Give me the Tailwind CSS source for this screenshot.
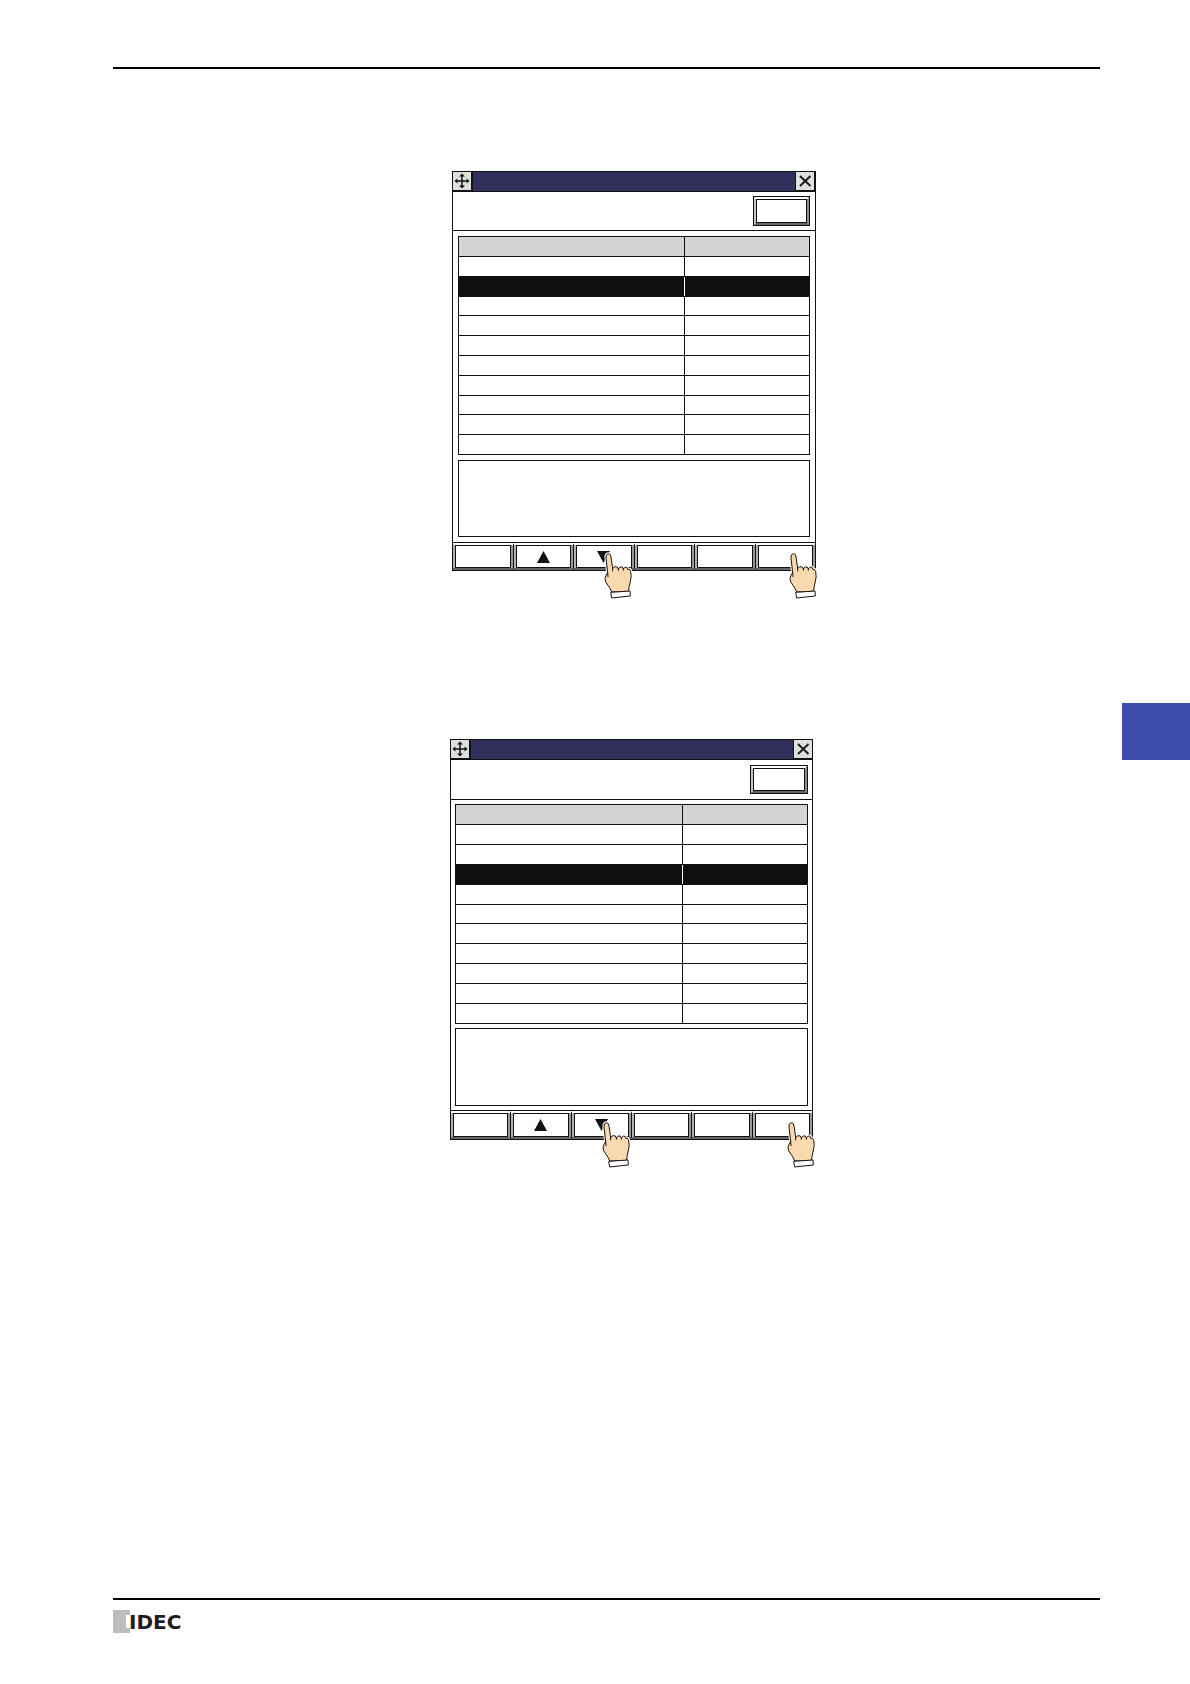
<!DOCTYPE html>
<html lang="en">
<head>
  <meta charset="UTF-8" />
  <meta name="viewport" content="width=device-width, initial-scale=1.0"/>
  <title>IDEC</title>
  <script src="https://cdn.jsdelivr.net/npm/@tailwindcss/browser@4"></script>
</head>
<body class="bg-white">
  <!-- shared icons -->
  <svg class="hidden">
    <symbol id="move" viewBox="0 0 18 18">
      <path d="M9 3v12M2.5 9h13" stroke="#141414" stroke-width="1.5" fill="none"/>
      <path d="M9 1.5L12 4.6H6zM9 16.5L12 13.4H6zM1.5 9L4.4 6.6v4.8zM16.5 9L13.6 6.6v4.8z" fill="#141414"/>
    </symbol>
    <symbol id="close" viewBox="0 0 18 18">
      <path d="M4 4l10.5 10M14.5 4L4 14" stroke="#1c1c1c" stroke-width="2" fill="none"/>
    </symbol>
    <symbol id="hand" viewBox="43 22 84 141">
      <path d="M54 84L49 40Q48 28 56 27Q63 27 64 37L69 71Q75 63 83 67L86 73Q91 64 98 67L101 73Q107 64 112 68L114 74Q120 71 123 80Q127 95 121 115Q117 128 117 138L121 139L122 154L66 160L63 143L66 140Q62 130 55 122Q46 112 46 101Q48 92 54 84Z" fill="#fff" stroke="#fff" stroke-width="9" stroke-linejoin="round"/>
      <path d="M54 84L49 40Q48 28 56 27Q63 27 64 37L69 71Q75 63 83 67L86 73Q91 64 98 67L101 73Q107 64 112 68L114 74Q120 71 123 80Q127 95 121 115Q117 128 117 140L66 142Q62 130 55 122Q46 112 46 101Q48 92 54 84Z" fill="#f8d9b0" stroke="#1b1410" stroke-width="3" stroke-linejoin="round"/>
      <path d="M54 84L55 96M69 71V79M86 73V77M101 73V77" fill="none" stroke="#1b1410" stroke-width="3" stroke-linecap="round"/>
      <path d="M63 143L121 139L122 154L66 160Z" fill="#fff" stroke="#1b1410" stroke-width="3" stroke-linejoin="round"/>
    </symbol>
  </svg>

  <div class="relative min-h-screen flex flex-col pl-[113px] pr-[90px] pt-[67px] pb-[50px]">
    <header class="border-t-2 border-black"></header>

    <main class="flex-1">
      <!-- first window -->
      <section class="relative w-[364px] mt-[102px] ml-[339px] border border-[#111]">
        <div class="flex h-5 bg-[#312f5b] border-b border-[#111]">
          <button aria-label="Move" class="w-5 bg-[#dfdfdb] border-r-2 border-b border-[#111]"><svg class="w-[18px] h-[18px]"><use href="#move"/></svg></button>
          <button aria-label="Close" class="ml-auto w-5 bg-[#dfdfdb] border-x border-b border-[#111]"><svg class="w-[18px] h-[18px]"><use href="#close"/></svg></button>
        </div>
        <div class="flex items-center justify-end h-[39px] px-[5px] border-b border-[#111]">
          <button aria-label="Top" class="flex w-[57px] h-[30px] border border-[#111]">
            <span class="block w-full h-full border-2 border-t-white border-l-[#c9c5c0] border-r-[#8c8c8c] border-b-[#666]"><span class="block w-full h-full border border-[#111]"></span></span>
          </button>
        </div>
        <div class="p-[5px] flex flex-col gap-[5px]">
          <table class="w-full h-[219px] table-fixed border-collapse">
            <thead>
              <tr class="h-5 bg-[#d3d3d3]"><th class="w-[226px] h-5 p-0 border border-[#111]"></th><th class="p-0 border border-[#111]"></th></tr>
            </thead>
            <tbody>
              <tr><td class="p-0 border border-[#111]"></td><td class="p-0 border border-[#111]"></td></tr>
              <tr class="bg-[#0f0f0f]"><td class="p-0 border border-[#111] border-r-white"></td><td class="p-0 border border-[#111] border-l-white"></td></tr>
              <tr><td class="p-0 border border-[#111]"></td><td class="p-0 border border-[#111]"></td></tr>
              <tr><td class="p-0 border border-[#111]"></td><td class="p-0 border border-[#111]"></td></tr>
              <tr><td class="p-0 border border-[#111]"></td><td class="p-0 border border-[#111]"></td></tr>
              <tr><td class="p-0 border border-[#111]"></td><td class="p-0 border border-[#111]"></td></tr>
              <tr><td class="p-0 border border-[#111]"></td><td class="p-0 border border-[#111]"></td></tr>
              <tr><td class="p-0 border border-[#111]"></td><td class="p-0 border border-[#111]"></td></tr>
              <tr><td class="p-0 border border-[#111]"></td><td class="p-0 border border-[#111]"></td></tr>
              <tr><td class="p-0 border border-[#111]"></td><td class="p-0 border border-[#111]"></td></tr>
            </tbody>
          </table>
          <div class="h-[77px] border border-[#111]"></div>
        </div>
        <div class="flex h-7 border-t border-[#111] divide-x divide-[#111]">
          <button aria-label="F1" class="flex-1 border-t-2 border-t-white border-b-2 border-b-[#666]"><span class="block h-full border-l-2 border-l-[#b5b1ad] border-r-2 border-r-[#999]"><span class="block h-full border border-[#111]"></span></span></button>
          <button aria-label="Up" class="flex-1 border-t-2 border-t-white border-b-2 border-b-[#666]"><span class="block h-full border-l-2 border-l-[#b5b1ad] border-r-2 border-r-[#999]"><span class="flex items-center justify-center h-full border border-[#111]"><svg class="w-[13px] h-3" viewBox="0 0 13 12"><path d="M6.5 0L13 12H0z" fill="#111"/></svg></span></span></button>
          <button aria-label="Down" class="flex-1 border-t-2 border-t-white border-b-2 border-b-[#666]"><span class="block h-full border-l-2 border-l-[#b5b1ad] border-r-2 border-r-[#999]"><span class="flex items-center justify-center h-full border border-[#111]"><svg class="w-[13px] h-3" viewBox="0 0 13 12"><path d="M0 0h13L6.5 12z" fill="#111"/></svg></span></span></button>
          <button aria-label="F4" class="flex-1 border-t-2 border-t-white border-b-2 border-b-[#666]"><span class="block h-full border-l-2 border-l-[#b5b1ad] border-r-2 border-r-[#999]"><span class="block h-full border border-[#111]"></span></span></button>
          <button aria-label="F5" class="flex-1 border-t-2 border-t-white border-b-2 border-b-[#666]"><span class="block h-full border-l-2 border-l-[#b5b1ad] border-r-2 border-r-[#999]"><span class="block h-full border border-[#111]"></span></span></button>
          <button aria-label="F6" class="flex-1 border-t-2 border-t-white border-b-2 border-b-[#666]"><span class="block h-full border-l-2 border-l-[#b5b1ad] border-r-2 border-r-[#999]"><span class="block h-full border border-[#111]"></span></span></button>
        </div>
        <svg class="absolute left-[151px] top-[380px] w-7 h-[47px] overflow-visible"><use href="#hand"/></svg>
        <svg class="absolute left-[336px] top-[380px] w-7 h-[47px] overflow-visible"><use href="#hand"/></svg>
      </section>

      <!-- second window -->
      <section class="relative w-[363px] mt-[168px] ml-[337px] border border-[#111]">
        <div class="flex h-5 bg-[#312f5b] border-b border-[#111]">
          <button aria-label="Move" class="w-5 bg-[#dfdfdb] border-r-2 border-b border-[#111]"><svg class="w-[18px] h-[18px]"><use href="#move"/></svg></button>
          <button aria-label="Close" class="ml-auto w-[19px] bg-[#dfdfdb] border-l border-b border-[#111]"><svg class="w-[18px] h-[18px]"><use href="#close"/></svg></button>
        </div>
        <div class="flex items-center justify-end h-10 px-1 border-b border-[#111]">
          <button aria-label="Top" class="flex w-[58px] h-[29px] border border-[#111]">
            <span class="block w-full h-full border-2 border-t-white border-l-[#c9c5c0] border-r-[#8c8c8c] border-b-[#666]"><span class="block w-full h-full border border-[#111]"></span></span>
          </button>
        </div>
        <div class="p-1 flex flex-col gap-1">
          <table class="w-full h-[220px] table-fixed border-collapse">
            <thead>
              <tr class="h-5 bg-[#d3d3d3]"><th class="w-[227px] h-5 p-0 border border-[#111]"></th><th class="p-0 border border-[#111]"></th></tr>
            </thead>
            <tbody>
              <tr><td class="p-0 border border-[#111]"></td><td class="p-0 border border-[#111]"></td></tr>
              <tr><td class="p-0 border border-[#111]"></td><td class="p-0 border border-[#111]"></td></tr>
              <tr class="bg-[#0f0f0f]"><td class="p-0 border border-[#111] border-r-white"></td><td class="p-0 border border-[#111] border-l-white"></td></tr>
              <tr><td class="p-0 border border-[#111]"></td><td class="p-0 border border-[#111]"></td></tr>
              <tr><td class="p-0 border border-[#111]"></td><td class="p-0 border border-[#111]"></td></tr>
              <tr><td class="p-0 border border-[#111]"></td><td class="p-0 border border-[#111]"></td></tr>
              <tr><td class="p-0 border border-[#111]"></td><td class="p-0 border border-[#111]"></td></tr>
              <tr><td class="p-0 border border-[#111]"></td><td class="p-0 border border-[#111]"></td></tr>
              <tr><td class="p-0 border border-[#111]"></td><td class="p-0 border border-[#111]"></td></tr>
              <tr><td class="p-0 border border-[#111]"></td><td class="p-0 border border-[#111]"></td></tr>
            </tbody>
          </table>
          <div class="h-[78px] border border-[#111]"></div>
        </div>
        <div class="flex h-[29px] border-t border-[#111] divide-x divide-[#111]">
          <button aria-label="F1" class="flex-1 border-t-2 border-t-white border-b-2 border-b-[#666]"><span class="block h-full border-l-2 border-l-[#b5b1ad] border-r-2 border-r-[#999]"><span class="block h-full border border-[#111]"></span></span></button>
          <button aria-label="Up" class="flex-1 border-t-2 border-t-white border-b-2 border-b-[#666]"><span class="block h-full border-l-2 border-l-[#b5b1ad] border-r-2 border-r-[#999]"><span class="flex items-center justify-center h-full border border-[#111]"><svg class="w-[13px] h-3" viewBox="0 0 13 12"><path d="M6.5 0L13 12H0z" fill="#111"/></svg></span></span></button>
          <button aria-label="Down" class="flex-1 border-t-2 border-t-white border-b-2 border-b-[#666]"><span class="block h-full border-l-2 border-l-[#b5b1ad] border-r-2 border-r-[#999]"><span class="flex items-center justify-center h-full border border-[#111]"><svg class="w-[13px] h-3" viewBox="0 0 13 12"><path d="M0 0h13L6.5 12z" fill="#111"/></svg></span></span></button>
          <button aria-label="F4" class="flex-1 border-t-2 border-t-white border-b-2 border-b-[#666]"><span class="block h-full border-l-2 border-l-[#b5b1ad] border-r-2 border-r-[#999]"><span class="block h-full border border-[#111]"></span></span></button>
          <button aria-label="F5" class="flex-1 border-t-2 border-t-white border-b-2 border-b-[#666]"><span class="block h-full border-l-2 border-l-[#b5b1ad] border-r-2 border-r-[#999]"><span class="block h-full border border-[#111]"></span></span></button>
          <button aria-label="F6" class="flex-1 border-t-2 border-t-white border-b-2 border-b-[#666]"><span class="block h-full border-l-2 border-l-[#b5b1ad] border-r-2 border-r-[#999]"><span class="block h-full border border-[#111]"></span></span></button>
        </div>
        <svg class="absolute left-[151px] top-[381px] w-7 h-[47px] overflow-visible"><use href="#hand"/></svg>
        <svg class="absolute left-[336px] top-[381px] w-7 h-[47px] overflow-visible"><use href="#hand"/></svg>
      </section>
    </main>

    <!-- chapter tab -->
    <div class="absolute right-0 top-[703px] w-[68px] h-[57px] bg-[#3f4eab]"></div>

    <footer class="flex items-center border-t-2 border-black pt-[10px]">
      <svg class="w-[17px] h-6" viewBox="0 0 17 24"><path d="M0 0h17v5h-4v13h4v5H0z" fill="#bdbdbd"/></svg>
      <span class="-ml-px h-6 leading-6 text-[20px] font-bold font-['DejaVu_Sans',sans-serif] text-[#1f1c1d]">IDEC</span>
    </footer>
  </div>
</body>
</html>
